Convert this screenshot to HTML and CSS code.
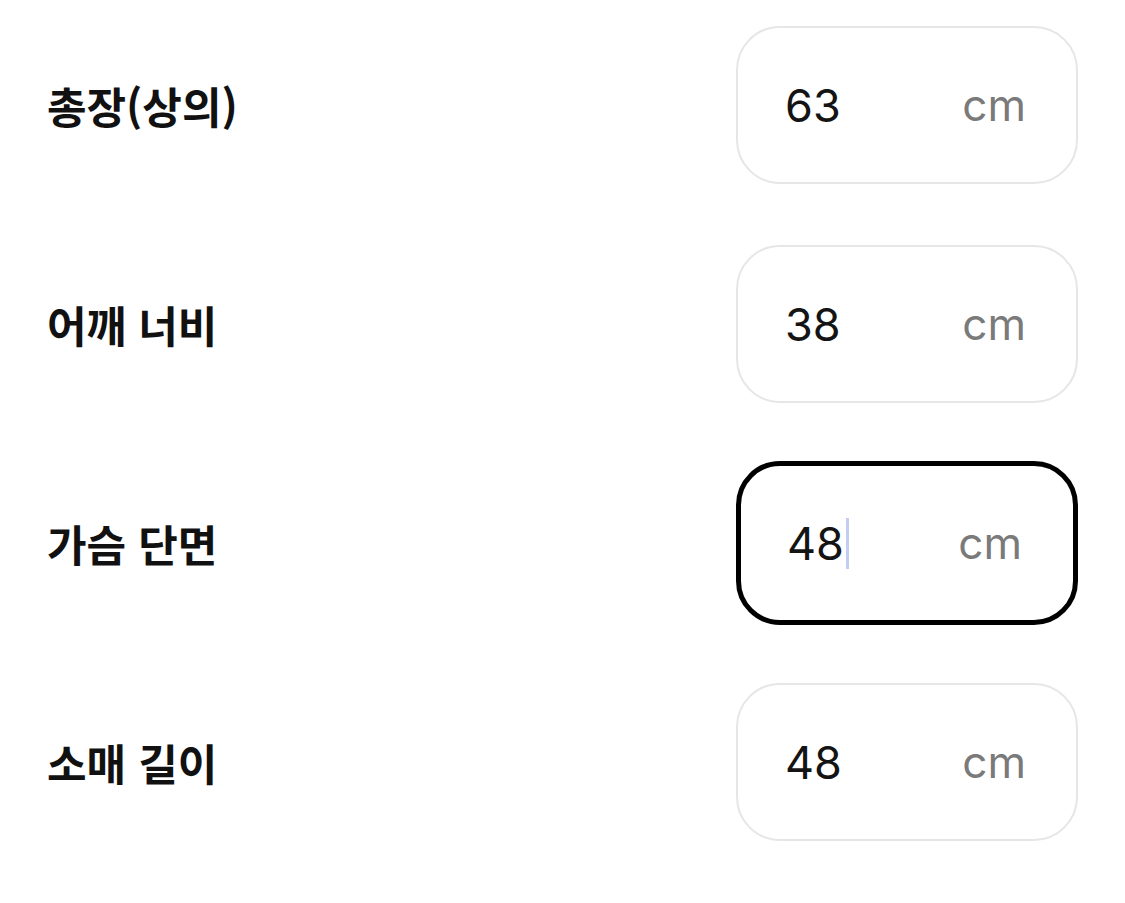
FILE: index.html
```html
<!DOCTYPE html>
<html lang="ko">
<head>
<meta charset="utf-8">
<title>사이즈 입력</title>
<link rel="stylesheet" href="styles.css">
</head>
<body>
<div class="form">
  <div class="row">
    <div class="label">총장(상의)</div>
    <div class="field"><span class="value">63</span><span class="unit">cm</span></div>
  </div>
  <div class="row">
    <div class="label">어깨 너비</div>
    <div class="field"><span class="value">38</span><span class="unit">cm</span></div>
  </div>
  <div class="row">
    <div class="label">가슴 단면</div>
    <div class="field focused"><span class="value">48<span class="caret"></span></span><span class="unit">cm</span></div>
  </div>
  <div class="row">
    <div class="label">소매 길이</div>
    <div class="field"><span class="value">48</span><span class="unit">cm</span></div>
  </div>
</div>
</body>
</html>
```
FILE: styles.css
```css
html, body {
  margin: 0;
  padding: 0;
  background: #ffffff;
}
.form {
  display: flex;
  flex-direction: column;
  gap: 61px;
  padding: 26px 47px 0 47px;
}
.row {
  display: flex;
  align-items: center;
  justify-content: space-between;
  height: 158px;
}
.label {
  font-family: "Noto Sans CJK KR", "Noto Sans", sans-serif;
  font-weight: 700;
  font-size: 43px;
  color: #111111;
}
.field {
  box-sizing: border-box;
  width: 342px;
  height: 158px;
  border: 2px solid #e6e6e6;
  border-radius: 44px;
  display: flex;
  align-items: center;
  padding: 0 50px 0 47px;
  font-family: Inter, "Noto Sans", sans-serif;
}
.field.focused {
  height: 164px;
  margin: -3px 0;
  border: 5px solid #000000;
  padding: 0 51px 0 46px;
}
.value {
  flex: 1;
  font-size: 45px;
  font-weight: 400;
  color: #141414;
  display: flex;
  align-items: center;
}
.caret {
  display: inline-block;
  width: 3px;
  height: 51px;
  background: #c3ccf2;
  margin-left: 2px;
}
.unit {
  font-size: 44px;
  font-weight: 400;
  color: #7a7a7a;
}
```
